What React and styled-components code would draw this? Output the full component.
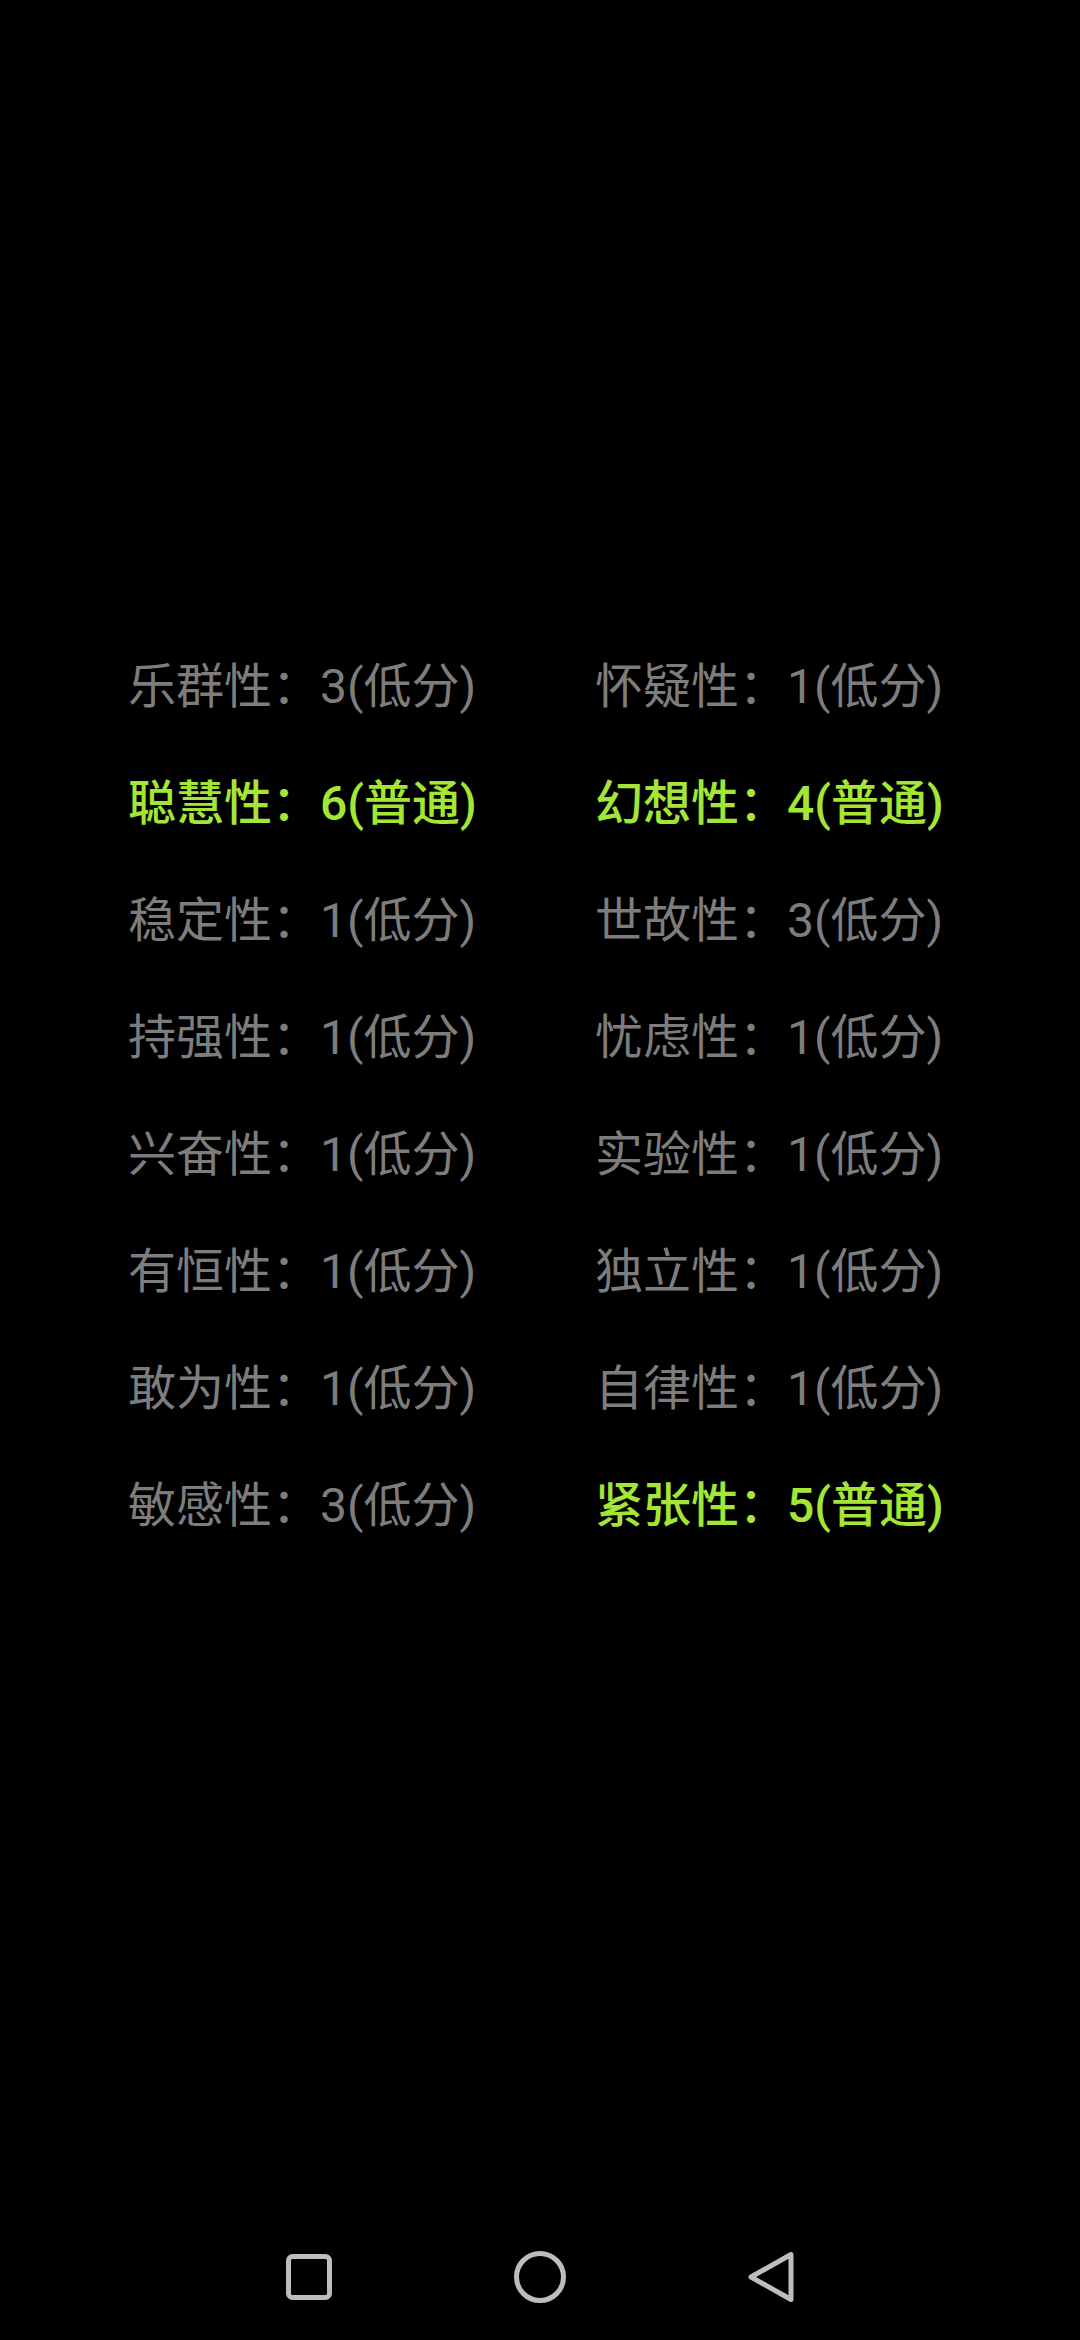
import React from "react";
import styled, { createGlobalStyle } from "styled-components";

const GlobalStyle = createGlobalStyle`
  html, body {
    margin: 0;
    padding: 0;
    background: #000;
  }
  body {
    font-family: Roboto, "Noto Sans CJK SC", sans-serif;
  }
`;

const Screen = styled.div`
  width: 1080px;
  height: 2340px;
  background: #000;
  display: flex;
  flex-direction: column;
`;

const Content = styled.main`
  flex: 1;
  padding-top: 628px;
  padding-left: 128px;
`;

const TraitGrid = styled.div`
  display: grid;
  grid-template-columns: 467px auto;
  grid-auto-rows: 117px;
`;

const Trait = styled.div`
  display: flex;
  align-items: center;
  font-size: 48px;
  line-height: 1;
  white-space: nowrap;
  color: ${(p) => (p.$normal ? "#a3e635" : "#7d7d7d")};
  font-weight: ${(p) => (p.$normal ? 500 : 400)};
`;

const NavBar = styled.nav`
  height: 126px;
  display: flex;
  justify-content: center;
  align-items: center;
  gap: 179px;
`;

const NavButton = styled.div`
  width: 52px;
  height: 52px;
  display: flex;
  align-items: center;
  justify-content: center;
  color: #bdbdbd;
`;

// 16 种人格因素，左右两列
const traits = [
  ["乐群性", 3],
  ["怀疑性", 1],
  ["聪慧性", 6],
  ["幻想性", 4],
  ["稳定性", 1],
  ["世故性", 3],
  ["持强性", 1],
  ["忧虑性", 1],
  ["兴奋性", 1],
  ["实验性", 1],
  ["有恒性", 1],
  ["独立性", 1],
  ["敢为性", 1],
  ["自律性", 1],
  ["敏感性", 3],
  ["紧张性", 5],
];

const level = (score) => (score >= 4 && score <= 7 ? "普通" : score < 4 ? "低分" : "高分");

const App = () => {
  return (
    <Screen>
      <GlobalStyle />
      <Content>
        <TraitGrid>
          {traits.map(([name, score]) => {
            const lv = level(score);
            return (
              <Trait key={name} $normal={lv === "普通"}>
                {name}：{score}({lv})
              </Trait>
            );
          })}
        </TraitGrid>
      </Content>
      <NavBar>
        <NavButton>
          <svg width="52" height="52" viewBox="0 0 52 52">
            <rect x="5.5" y="5.5" width="41" height="41" rx="4" fill="none" stroke="currentColor" strokeWidth="5" />
          </svg>
        </NavButton>
        <NavButton>
          <svg width="52" height="52" viewBox="0 0 52 52">
            <circle cx="26" cy="26" r="23.5" fill="none" stroke="currentColor" strokeWidth="5" />
          </svg>
        </NavButton>
        <NavButton>
          <svg width="52" height="52" viewBox="0 0 52 52">
            <path d="M6 26 L46 3.5 L46 48.5 Z" fill="none" stroke="currentColor" strokeWidth="5" strokeLinejoin="round" />
          </svg>
        </NavButton>
      </NavBar>
    </Screen>
  );
};

export default App;
